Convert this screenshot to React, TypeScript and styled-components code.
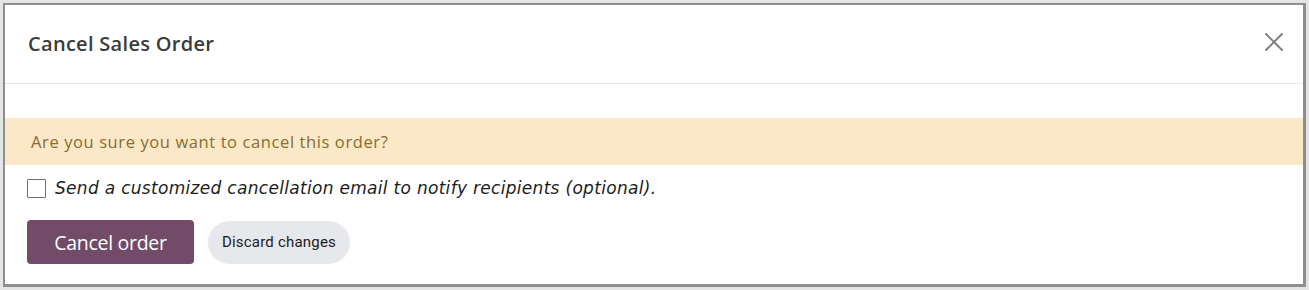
import React from 'react';
import styled, { createGlobalStyle } from 'styled-components';

const GlobalStyle = createGlobalStyle`
  html, body {
    margin: 0;
    padding: 0;
    background: #ffffff;
  }
  * {
    box-sizing: border-box;
  }
`;

const Page = styled.div`
  width: 1309px;
  height: 290px;
  padding: 3px;
  background: #e4e4e4;
`;

const Dialog = styled.div`
  width: 100%;
  height: 284px;
  display: flex;
  flex-direction: column;
  background: #fff;
  border: 2px solid #8e8e8e;
  border-right-width: 3px;
  border-bottom-width: 3px;
`;

const Header = styled.div`
  height: 79px;
  display: flex;
  align-items: center;
  justify-content: space-between;
  padding: 0 15px 0 23px;
  border-bottom: 1px solid #e8e8e8;
`;

const Title = styled.h4`
  margin: 0;
  margin-top: -2px;
  font-family: 'Open Sans', 'Noto Sans', sans-serif;
  font-size: 20px;
  font-weight: 600;
  color: #3b3b3d;
  letter-spacing: 0.3px;
`;

const CloseBtn = styled.button`
  width: 28px;
  height: 28px;
  padding: 0;
  border: none;
  background: none;
  display: flex;
  align-items: center;
  justify-content: center;
  margin-top: -4px;
`;

const Body = styled.div`
  padding-top: 34px;
  display: flex;
  flex-direction: column;
`;

const Alert = styled.div`
  height: 47px;
  display: flex;
  align-items: center;
  padding: 0 26px;
  background: #fbe8c6;
  font-family: 'Open Sans', 'Noto Sans', sans-serif;
  font-size: 16.5px;
  letter-spacing: 0.6px;
  color: #8a6b33;
`;

const CheckRow = styled.label`
  display: flex;
  align-items: center;
  gap: 9px;
  height: 45px;
  padding: 0 22px;
  padding-top: 1px;
`;

const Box = styled.span`
  width: 19px;
  height: 19px;
  border: 1px solid #6f6f6f;
  border-radius: 1px;
  background: #fff;
`;

const CheckText = styled.span`
  font-family: 'DejaVu Sans', 'Open Sans', sans-serif;
  font-style: italic;
  font-size: 17px;
  letter-spacing: 0.3px;
  color: #1c1c1c;
`;

const Footer = styled.div`
  display: flex;
  align-items: center;
  gap: 14px;
  padding: 10px 22px 0;
`;

const PrimaryBtn = styled.button`
  width: 167px;
  height: 44px;
  border: none;
  border-radius: 4px;
  background: #714b67;
  color: #fff;
  font-family: 'Open Sans', 'Noto Sans', sans-serif;
  font-size: 19.5px;
  letter-spacing: -0.3px;
`;

const SecondaryBtn = styled.button`
  width: 142px;
  height: 43px;
  border: none;
  border-radius: 22px;
  background: #e7e8ec;
  color: #1c1c1c;
  font-family: Roboto, 'Open Sans', sans-serif;
  font-size: 15px;
  letter-spacing: 0.2px;
`;

function App() {
  return (
    <Page>
      <GlobalStyle />
      <Dialog>
        <Header>
          <Title>Cancel Sales Order</Title>
          <CloseBtn aria-label="Close">
            <svg width="20" height="20" viewBox="0 0 20 20">
              <path
                d="M2 2 L18 18 M18 2 L2 18"
                stroke="#7a7a7a"
                strokeWidth="1.8"
                strokeLinecap="round"
              />
            </svg>
          </CloseBtn>
        </Header>
        <Body>
          <Alert>Are you sure you want to cancel this order?</Alert>
          <CheckRow>
            <Box />
            <CheckText>
              Send a customized cancellation email to notify recipients (optional).
            </CheckText>
          </CheckRow>
          <Footer>
            <PrimaryBtn>Cancel order</PrimaryBtn>
            <SecondaryBtn>Discard changes</SecondaryBtn>
          </Footer>
        </Body>
      </Dialog>
    </Page>
  );
}

export default App;
